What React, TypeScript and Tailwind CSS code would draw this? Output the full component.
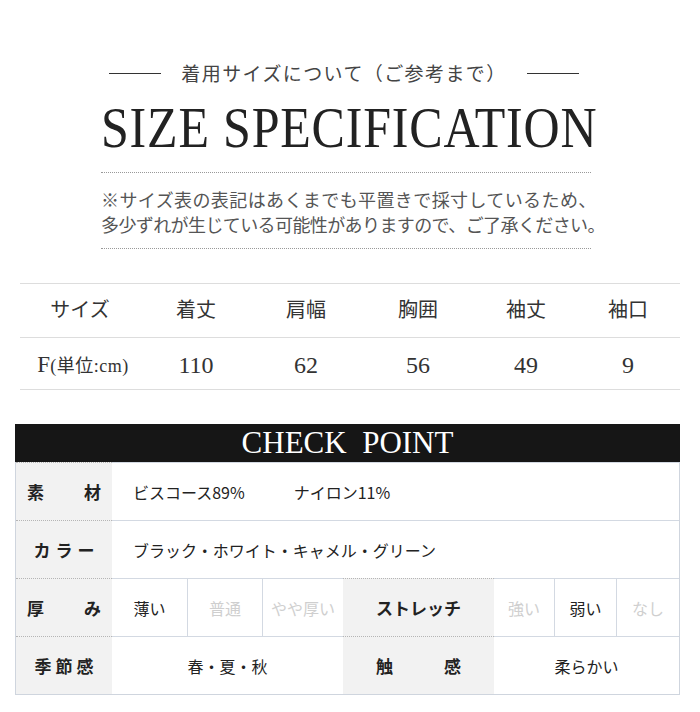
import React from 'react';

const jp = { fontFamily: '"Noto Sans CJK JP", "Noto Sans", sans-serif' };
const serif = { fontFamily: '"Liberation Serif", "Noto Sans CJK JP", serif' };

const sizeCols = ['w-[120px]', 'w-[112px]', 'w-[108px]', 'w-[116px]', 'w-[100px]', 'w-[104px]'];
const sizeHead = ['サイズ', '着丈', '肩幅', '胸囲', '袖丈', '袖口'];
const sizeVals = ['110', '62', '56', '49', '9'];

// gray label cell with dotted top rule
function Label({ children, className = '' }: { children: React.ReactNode; className?: string }) {
  return (
    <div
      className={`flex items-center bg-[#f2f2f2] border-t border-dotted border-[#b5b5b5] text-[17px] font-bold text-[#222] ${className}`}
    >
      {children}
    </div>
  );
}

function Cell({ children, className = '' }: { children: React.ReactNode; className?: string }) {
  return (
    <div className={`flex items-center border-t border-[#d3d9e2] text-[16px] ${className}`}>{children}</div>
  );
}

export default function App() {
  return (
    <div className="w-[700px] h-[712px] bg-white overflow-hidden" style={jp}>
      {/* heading */}
      <div className="pt-[60px] flex items-center justify-center gap-[20px] pr-[12px]">
        <div className="w-[52px] h-px bg-[#333]" />
        <div className="text-[19px] leading-[26px] tracking-[1.4px] text-[#444]">着用サイズについて（ご参考まで）</div>
        <div className="w-[52px] h-px bg-[#333]" />
      </div>

      <div className="ml-[101px] w-[490px]">
        <div
          className="mt-[15px] text-[50px] leading-[55px] tracking-[0.8px] text-[#222] whitespace-nowrap scale-y-[1.15] origin-center"
          style={serif}
        >
          SIZE SPECIFICATION
        </div>
        <div className="mt-[16px] border-t border-dotted border-[#999]" />
        <div className="pt-[14px] pb-[11px] text-[18px] leading-[25px] text-[#555] whitespace-nowrap">
          <div className="tracking-[0.4px]">※サイズ表の表記はあくまでも平置きで採寸しているため、</div>
          <div className="tracking-[-0.6px]">多少ずれが生じている可能性がありますので、ご了承ください。</div>
        </div>
        <div className="border-t border-dotted border-[#999]" />
      </div>

      {/* size table */}
      <div className="ml-[20px] w-[660px] mt-[34px] border-t border-[#ddd] text-[#333]">
        <div className="flex h-[54px] items-center border-b border-[#ddd] pb-[3px]">
          {sizeHead.map((h, i) => (
            <div key={h} className={`${sizeCols[i]} text-center text-[20px]`}>
              {h}
            </div>
          ))}
        </div>
        <div className="flex h-[52px] items-center border-b border-[#ddd] pt-[3px]">
          <div className={`${sizeCols[0]} text-center whitespace-nowrap pl-[6px]`} style={serif}>
            <span className="text-[23px]">F</span>
            <span className="text-[18px] tracking-[0.5px]">(単位:cm)</span>
          </div>
          {sizeVals.map((v, i) => (
            <div key={i} className={`${sizeCols[i + 1]} text-center text-[24px]`} style={serif}>
              {v}
            </div>
          ))}
        </div>
      </div>

      {/* check point */}
      <div className="ml-[15px] w-[665px] mt-[34px]">
        <div
          className="h-[38px] bg-[#161616] text-white text-[31px] leading-[38px] text-center whitespace-pre"
          style={serif}
        >
          CHECK  POINT
        </div>
        <div className="border-x border-b border-[#cfd5de] text-[#222]">
          <div className="flex h-[58px]">
            <Label className="w-[96px] justify-between px-[11px]">
              <span>素</span>
              <span>材</span>
            </Label>
            <Cell className="flex-1 pl-[21px] gap-[49px]">
              <span>ビスコース89%</span>
              <span>ナイロン11%</span>
            </Cell>
          </div>
          <div className="flex h-[58px]">
            <Label className="w-[96px] justify-center tracking-[5px] pl-[5px]">カラー</Label>
            <Cell className="flex-1 pl-[21px]">ブラック・ホワイト・キャメル・グリーン</Cell>
          </div>
          <div className="flex h-[58px]">
            <Label className="w-[96px] justify-between px-[11px]">
              <span>厚</span>
              <span>み</span>
            </Label>
            <Cell className="w-[75px] justify-center">薄い</Cell>
            <Cell className="w-[75px] justify-center border-l text-[#cfcfcf]">普通</Cell>
            <Cell className="w-[81px] justify-center border-l text-[#cfcfcf]">やや厚い</Cell>
            <Label className="w-[151px] justify-center">ストレッチ</Label>
            <Cell className="w-[60px] justify-center text-[#cfcfcf]">強い</Cell>
            <Cell className="w-[62px] justify-center border-l">弱い</Cell>
            <Cell className="flex-1 justify-center border-l text-[#cfcfcf]">なし</Cell>
          </div>
          <div className="flex h-[58px]">
            <Label className="w-[96px] justify-center tracking-[4px] pl-[4px]">季節感</Label>
            <Cell className="w-[231px] justify-center">春・夏・秋</Cell>
            <Label className="w-[151px] justify-between px-[33px]">
              <span>触</span>
              <span>感</span>
            </Label>
            <Cell className="flex-1 justify-center">柔らかい</Cell>
          </div>
        </div>
      </div>
    </div>
  );
}
